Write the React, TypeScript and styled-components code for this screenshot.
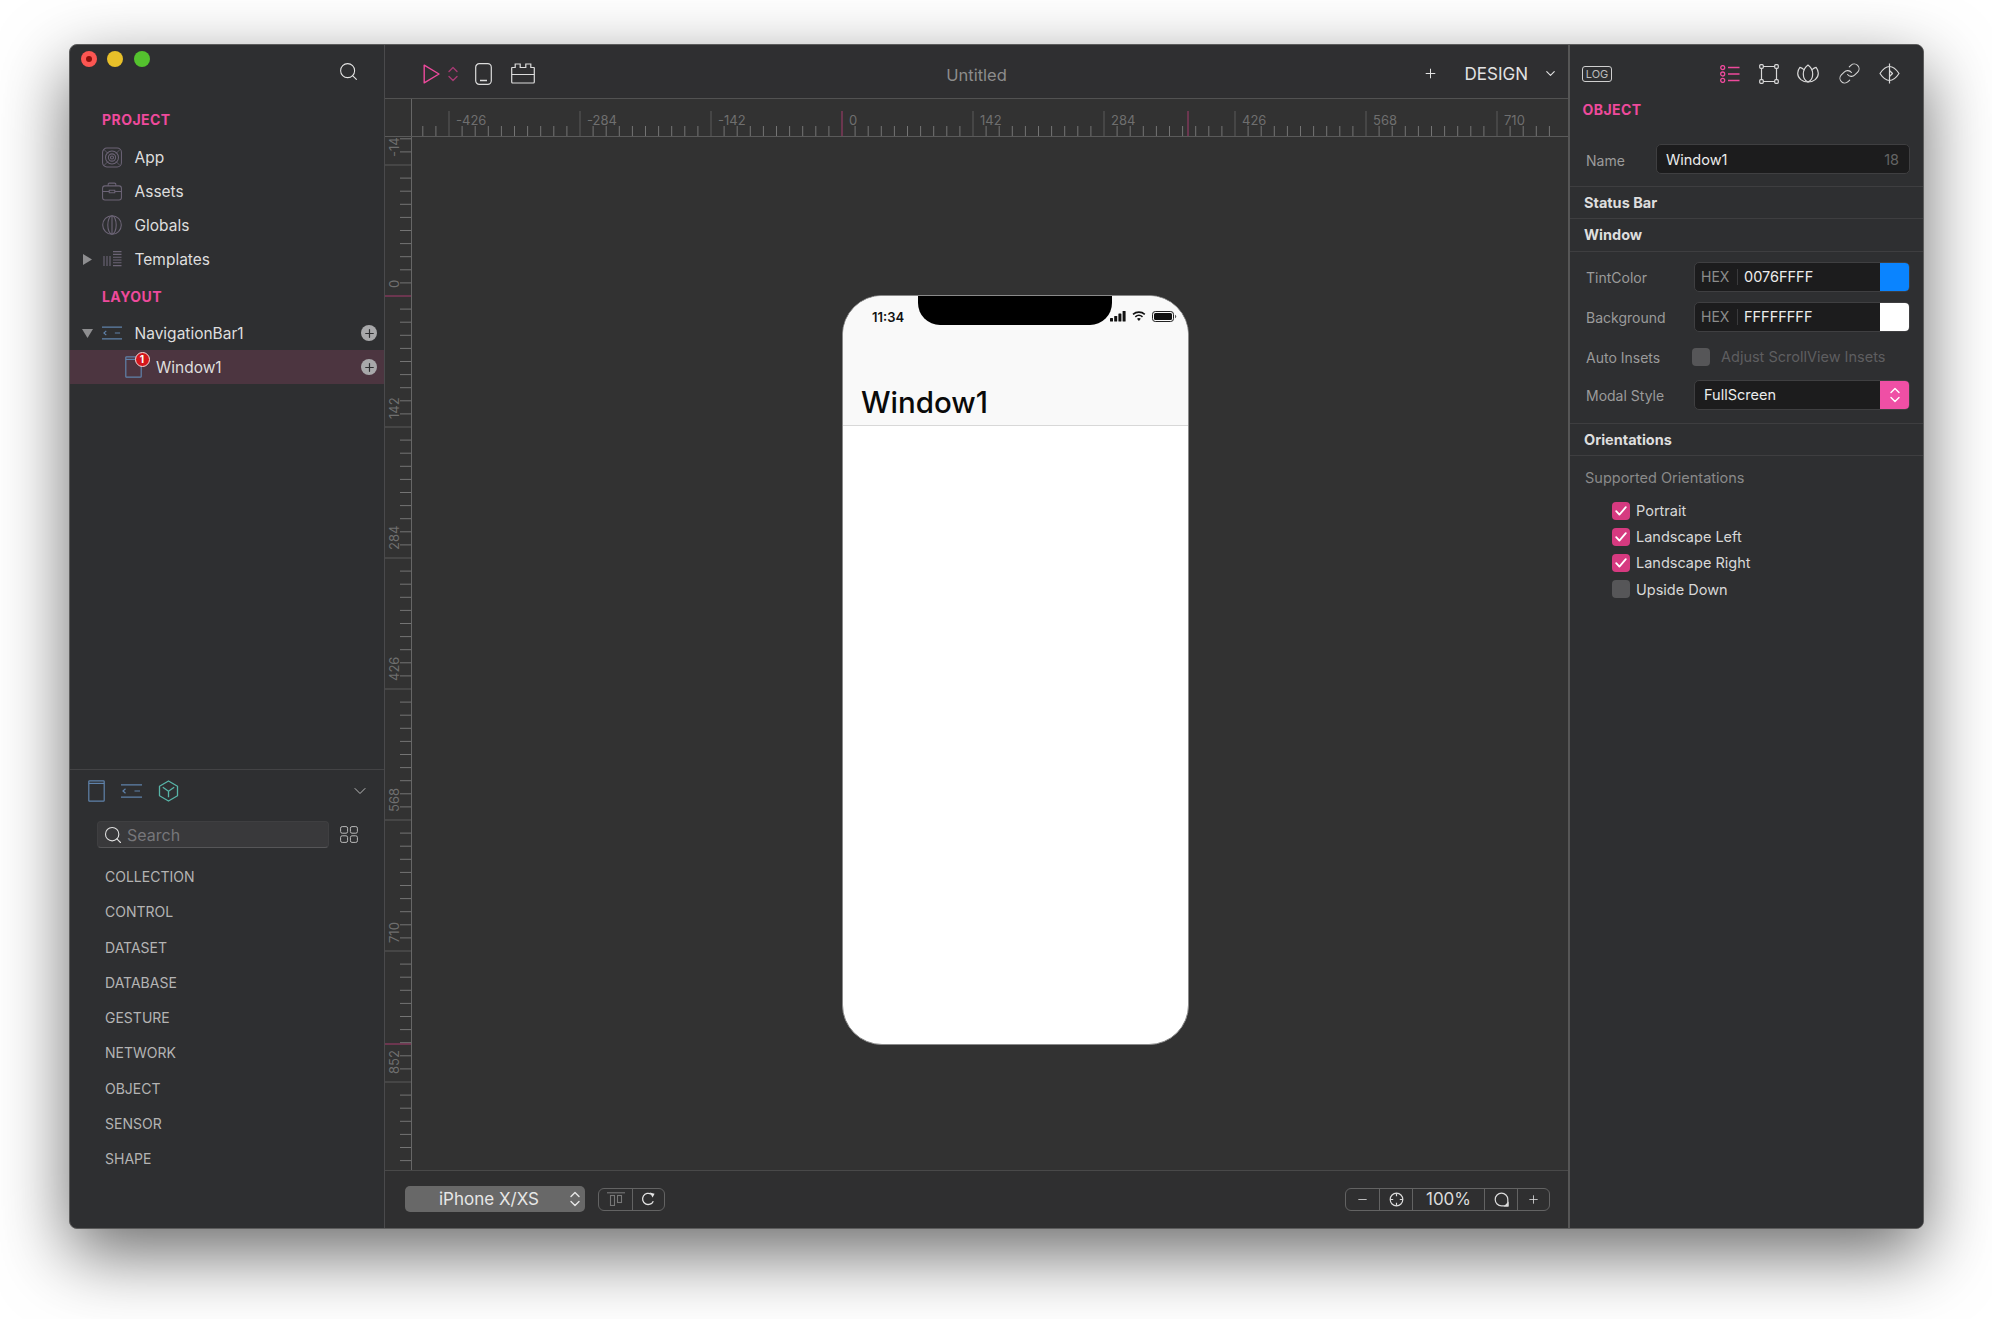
import React from 'react';
import styled, { createGlobalStyle } from 'styled-components';
import { Search, Plus, Minus, ChevronDown, Link as LinkGlyph } from 'lucide-react';

const PINK = '#ee4a9c';
const FONT = "Inter, 'Noto Sans', 'Liberation Sans', sans-serif";

const GlobalStyle = createGlobalStyle`
  html, body {
    margin: 0;
    background: #fff;
    font-family: ${FONT};
  }
  * { box-sizing: border-box; }
`;

const Page = styled.div`
  width: 1992px;
  height: 1319px;
  padding: 44px 0 0 69px;
  overflow: hidden;
`;

const Window = styled.div`
  width: 1855px;
  height: 1185px;
  display: grid;
  grid-template-columns: 315px 1fr 353px;
  background: #2e2f31;
  border: 1px solid #5c5c5c;
  border-radius: 8px;
  overflow: hidden;
  box-shadow: 0 25px 70px rgba(0, 0, 0, 0.58);
`;

/* left sidebar */

const Sidebar = styled.aside`
  display: flex;
  flex-direction: column;
  border-right: 1px solid #4a4a4c;
  min-height: 0;
`;

const SidebarTop = styled.div`
  flex: 1;
`;

const TitleBar = styled.div`
  height: 65px;
  padding: 6px 25px 0 11px;
  display: flex;
  justify-content: space-between;
  align-items: flex-start;
  color: #e4e4e4;
`;

const Lights = styled.div`
  display: flex;
  gap: 10.3px;
`;

const Light = styled.span<{ $color: string }>`
  width: 16px;
  height: 16px;
  border-radius: 50%;
  background: ${(p) => p.$color};
  display: flex;
  align-items: center;
  justify-content: center;
`;

const CloseDot = styled.span`
  width: 6px;
  height: 6px;
  border-radius: 50%;
  background: #8e0f0a;
`;

const SearchButton = styled.span`
  margin-top: 10px;
  display: flex;
`;

const SectionLabel = styled.div`
  font-size: 14px;
  font-weight: 700;
  line-height: 20px;
  color: ${PINK};
  letter-spacing: 0.45px;
`;

const SideLabel = styled(SectionLabel)<{ $top: number; $bottom: number }>`
  margin: ${(p) => p.$top}px 0 ${(p) => p.$bottom}px 32px;
`;

const TreeRow = styled.div<{ $selected?: boolean }>`
  height: 34px;
  display: flex;
  align-items: center;
  padding-left: 12px;
  padding-right: 7px;
  font-size: 15.5px;
  color: #dedede;
  background: ${(p) => (p.$selected ? '#4c3540' : 'transparent')};
`;

const Disclosure = styled.span`
  width: 20px;
  display: flex;
  align-items: center;
`;

const RowIcon = styled.span<{ $indent?: number }>`
  width: 20px;
  margin-left: ${(p) => p.$indent || 0}px;
  margin-right: 12.5px;
  display: flex;
  justify-content: center;
  position: relative;
`;

const Badge = styled.span`
  position: absolute;
  left: 11px;
  top: -4px;
  width: 15px;
  height: 15px;
  border-radius: 50%;
  background: #d4161c;
  border: 1px solid #f3dada;
  color: #fff;
  font-size: 10px;
  font-weight: 700;
  line-height: 13px;
  text-align: center;
`;

const AddCircle = styled.span`
  margin-left: auto;
  width: 16px;
  height: 16px;
  border-radius: 50%;
  background: #a8a8aa;
  color: #2e2f31;
  display: flex;
  align-items: center;
  justify-content: center;
`;

const Library = styled.div`
  height: 459px;
  border-top: 1px solid #434345;
`;

const LibraryTabs = styled.div`
  height: 42px;
  display: flex;
  align-items: center;
  gap: 16px;
  padding: 0 14px 0 18px;
  color: #b8b8b8;
`;

const TabChevron = styled.span`
  margin-left: auto;
  display: flex;
`;

const LibrarySearchRow = styled.div`
  margin-top: 9px;
  padding-left: 27px;
  display: flex;
  align-items: center;
  gap: 11px;
`;

const SearchField = styled.div`
  width: 232px;
  height: 27px;
  background: #39393b;
  border: 1px solid #3f3f41;
  border-bottom-color: #565658;
  border-radius: 4px;
  display: flex;
  align-items: center;
  gap: 4px;
  padding-left: 5px;
  font-size: 16px;
  color: #76767a;
`;

const CategoryList = styled.div`
  margin-top: 11px;
  padding-left: 35px;
`;

const Category = styled.div`
  height: 35.3px;
  line-height: 35.3px;
  font-size: 14px;
  color: #b4b4b4;
`;

/* centre column */

const Center = styled.main`
  display: flex;
  flex-direction: column;
  min-width: 0;
  background: #323232;
  border-right: 2px solid #565656;
`;

const Toolbar = styled.header`
  height: 54px;
  border-bottom: 1px solid #525252;
  background: #2f2f31;
  display: grid;
  grid-template-columns: 1fr auto 1fr;
  align-items: center;
  padding-top: 4px;
`;

const ToolGroup = styled.div`
  display: flex;
  align-items: center;
  padding-left: 38px;
`;

const ToolSlot = styled.span<{ $left: number }>`
  margin-left: ${(p) => p.$left}px;
  display: flex;
`;

const ToolTitle = styled.div`
  padding-top: 2px;
  font-size: 16.5px;
  color: #8c8c8c;
`;

const ModeGroup = styled.div`
  display: flex;
  align-items: center;
  justify-content: flex-end;
  padding-right: 10px;
  color: #e2e2e2;
`;

const ModeLabel = styled.span`
  font-size: 17px;
  margin: 0 15px 0 27px;
`;

const RulerSvg = styled.svg`
  display: block;
  flex: none;
`;

const RulerText = styled.text`
  font-family: ${FONT};
  font-size: 13px;
  fill: #6f6f6f;
`;

const Workspace = styled.div`
  flex: 1;
  display: flex;
  min-height: 0;
`;

const Canvas = styled.div`
  flex: 1;
  padding: 158px 0 0 430px;
`;

const Phone = styled.div`
  width: 347px;
  height: 750px;
  background: #fff;
  border: 1px solid #8a8a8a;
  border-radius: 40px;
  overflow: hidden;
`;

const PhoneNav = styled.div`
  height: 130px;
  background: #f9f9f9;
  border-bottom: 1px solid #d8d8d8;
`;

const StatusBar = styled.div`
  display: flex;
  align-items: flex-start;
  height: 87px;
`;

const StatusTime = styled.span`
  width: 75px;
  padding: 13px 0 0 29px;
  font-size: 13px;
  font-weight: 600;
  color: #111;
`;

const Notch = styled.span`
  width: 194px;
  height: 29px;
  background: #000;
  border-radius: 0 0 22px 22px;
`;

const StatusIcons = styled.span`
  margin: 14px 0 0 -2px;
  display: flex;
`;

const PhoneTitle = styled.div`
  padding-left: 18px;
  font-size: 29.5px;
  line-height: 38px;
  font-weight: 500;
  color: #0a0a0a;
`;

const BottomBar = styled.footer`
  height: 58px;
  border-top: 1px solid #494949;
  background: #2f2f30;
  display: flex;
  align-items: center;
  padding: 0 18px 1px 20px;
`;

const DeviceSelect = styled.div`
  width: 180px;
  height: 26px;
  border-radius: 5px;
  background: #686868;
  color: #e6e6e6;
  font-size: 17px;
  display: flex;
  align-items: center;
  padding: 0 5px 0 34px;
  justify-content: space-between;
`;

const ButtonGroup = styled.div<{ $left?: boolean }>`
  height: 23px;
  display: flex;
  border: 1px solid #636363;
  border-radius: 6px;
  margin-left: ${(p) => (p.$left ? 'auto' : '13px')};
  color: #dcdcdc;
`;

const GroupCell = styled.span<{ $width: number }>`
  width: ${(p) => p.$width}px;
  display: flex;
  align-items: center;
  justify-content: center;
  font-size: 17px;
  & + & {
    border-left: 1px solid #636363;
  }
`;

/* right panel */

const Inspector = styled.aside`
  min-width: 0;
  background: #2e2f31;
`;

const InspectorHead = styled.div`
  height: 55px;
  padding: 2px 23px 0 12px;
  display: flex;
  align-items: center;
  color: #d8d8d8;
`;

const LogBadge = styled.span`
  width: 30px;
  height: 16px;
  border: 1px solid #cfcfcf;
  border-radius: 3px;
  font-size: 11px;
  line-height: 14px;
  text-align: center;
  color: #bcbcbc;
  margin-right: auto;
`;

const InspectorTabs = styled.div`
  display: flex;
  align-items: center;
  gap: 18.5px;
`;

const ObjectLabel = styled(SectionLabel)`
  padding-left: 12.5px;
`;

const NameRow = styled.div`
  margin-top: 24px;
  padding: 0 13px 11.5px 16px;
  display: flex;
  align-items: center;
  border-bottom: 1px solid #3e3e40;
`;

const FieldLabel = styled.span<{ $width: number }>`
  width: ${(p) => p.$width}px;
  flex: none;
  padding-top: 2px;
  font-size: 14px;
  color: #9b9b9b;
`;

const Field = styled.div`
  flex: 1;
  height: 30px;
  background: #1c1c1d;
  border: 1px solid #3f3f41;
  border-radius: 5px;
  display: flex;
  align-items: center;
  justify-content: space-between;
  overflow: hidden;
  font-size: 14.5px;
  color: #ececec;
`;

const NameValue = styled.span`
  padding-left: 9px;
`;

const NameCount = styled.span`
  padding-right: 10px;
  font-size: 14.5px;
  color: #646464;
`;

const GroupHead = styled.div<{ $height: number }>`
  height: ${(p) => p.$height}px;
  display: flex;
  align-items: center;
  padding-left: 14px;
  font-size: 14.5px;
  font-weight: 700;
  color: #dedede;
  border-bottom: 1px solid #3e3e40;
`;

const FormBlock = styled.div`
  padding: 0 13px 13px 16px;
  border-bottom: 1px solid #3e3e40;
`;

const FormRow = styled.div`
  margin-top: 10px;
  display: flex;
  align-items: center;
  height: 30px;
`;

const InsetsRow = styled(FormRow)`
  margin-top: 12px;
  height: 26px;
`;

const HexPrefix = styled.span`
  width: 37px;
  height: 16px;
  margin-left: 6px;
  border-right: 1px solid #3a3a3c;
  line-height: 16px;
  color: #8b8b8b;
  font-size: 14px;
  flex: none;
`;

const HexValue = styled.span`
  flex: 1;
  padding-left: 6px;
  font-size: 14.5px;
`;

const Swatch = styled.span<{ $color: string }>`
  width: 29px;
  align-self: stretch;
  background: ${(p) => p.$color};
  display: flex;
  align-items: center;
  justify-content: center;
  color: #fff;
`;

const SelectValue = styled.span`
  flex: 1;
  padding-left: 9px;
  font-size: 14.5px;
`;

const Box = styled.span<{ $on?: boolean }>`
  width: 18px;
  height: 18px;
  flex: none;
  border-radius: 4px;
  background: ${(p) => (p.$on ? '#d63a80' : '#565658')};
  display: flex;
  align-items: center;
  justify-content: center;
`;

const InsetsHint = styled.span`
  margin-left: 11px;
  font-size: 14.5px;
  color: #5e5e60;
`;

const InsetsBox = styled(Box)`
  margin-left: -2px;
`;

const SupportedLabel = styled.div`
  margin: 12px 0 10px 15px;
  height: 20px;
  line-height: 20px;
  font-size: 14.5px;
  color: #8a8a8a;
`;

const CheckRow = styled.div`
  height: 26.2px;
  padding-left: 42px;
  display: flex;
  align-items: center;
  gap: 6px;
  font-size: 14.5px;
  color: #d8d8d8;
`;

/* drawings */

const PURPLE = '#6c6476';
const BLUE = '#5f82aa';

const AppIcon = () => (
  <svg width="21" height="21" viewBox="0 0 21 21" fill="none" stroke={PURPLE} strokeWidth="1.1">
    <rect x="0.6" y="0.6" width="19.8" height="19.8" rx="4.5" />
    <circle cx="10.5" cy="10.5" r="6.8" />
    <circle cx="10.5" cy="10.5" r="3.8" />
    <circle cx="10.5" cy="10.5" r="1.6" />
    <path d="M2 2l4.500 4.500M19 2l-4.500 4.500M2 19l4.500-4.500M19 19l-4.500-4.500" strokeWidth="0.8" />
  </svg>
);

const BriefcaseIcon = () => (
  <svg width="21" height="19" viewBox="0 0 21 19" fill="none" stroke={PURPLE} strokeWidth="1.1">
    <rect x="0.6" y="3.6" width="19.8" height="14.8" rx="2.5" />
    <path d="M6.500 3.500V2a1.300 1.300 0 0 1 1.300-1.300h5.400A1.300 1.300 0 0 1 14.500 2v1.500M0.600 9.500h7M13.400 9.500h7M7.600 8.200h5.800v2.600H7.600z" />
  </svg>
);

const GlobeIcon = () => (
  <svg width="20" height="20" viewBox="0 0 20 20" fill="none" stroke={PURPLE} strokeWidth="1.1">
    <circle cx="10" cy="10" r="9.3" />
    <ellipse cx="10" cy="10" rx="4.2" ry="9.3" />
    <path d="M10 0.7v18.6" />
  </svg>
);

const TemplatesIcon = () => (
  <svg width="19" height="16" viewBox="0 0 19 16" fill="none" stroke={PURPLE} strokeWidth="1.1">
    <path d="M1 5v10M4 5v10M7 5v10M10 .6h8.500M10 3.400h8.500M10 6.200h8.500M10 9h8.500M10 11.800h8.500M10 14.600h8.500" />
  </svg>
);

const NavBarIcon = () => (
  <svg width="21" height="14" viewBox="0 0 21 14" fill="none" stroke={BLUE} strokeWidth="1.2">
    <path d="M0 .8h21M0 13.200h21M4.500 4.800L2 7l2.500 2.200M13.500 7H19" />
  </svg>
);

const WindowIcon = () => (
  <svg width="17" height="22" viewBox="0 0 17 22" fill="none" stroke={BLUE} strokeWidth="1.2">
    <rect x="0.8" y="0.8" width="15.4" height="20.4" rx="0.8" />
    <path d="M0.8 3.400h15.400" />
  </svg>
);

const CubeIcon = () => (
  <svg width="21" height="22" viewBox="0 0 21 22" fill="none" stroke="#58b5a8" strokeWidth="1.3" strokeLinejoin="round">
    <path d="M10.500 1l9 5.200v9.600l-9 5.200-9-5.200V6.200z" />
    <path d="M4.800 7.200l5.700 4 5.700-4M10.500 11.200v6" />
  </svg>
);

const GridIcon = () => (
  <svg width="18" height="17" viewBox="0 0 18 17" fill="none" stroke="#b8b8b8" strokeWidth="1">
    <rect x="0.6" y="0.6" width="7" height="6.6" rx="1.6" />
    <rect x="10.4" y="0.6" width="7" height="6.6" rx="1.6" />
    <rect x="0.6" y="9.8" width="7" height="6.6" rx="1.6" />
    <rect x="10.4" y="9.8" width="7" height="6.6" rx="1.6" />
  </svg>
);

const PlayIcon = () => (
  <svg width="17" height="20" viewBox="0 0 17 20" fill="none" stroke={PINK} strokeWidth="1.4" strokeLinejoin="round">
    <path d="M1.200 1.200L16 10 1.200 18.800z" />
  </svg>
);

const Stepper = ({ color }: { color: string }) => (
  <svg width="10" height="16" viewBox="0 0 10 16" fill="none" stroke={color} strokeWidth="1.4" strokeLinecap="round" strokeLinejoin="round">
    <path d="M1 5.500L5 1.500l4 4M1 10.500l4 4 4-4" />
  </svg>
);

const DeviceIcon = () => (
  <svg width="17" height="22" viewBox="0 0 17 22" fill="none" stroke="#dcdcdc" strokeWidth="1.2">
    <rect x="0.7" y="0.7" width="15.6" height="20.6" rx="3.6" />
    <path d="M5 17.600h7" strokeWidth="1.5" />
  </svg>
);

const BrickIcon = () => (
  <svg width="24" height="21" viewBox="0 0 24 21" fill="none" stroke="#dcdcdc" strokeWidth="1.2">
    <path d="M1 4.500h3.200V1h5v3.500h5.600V1h5v3.500H23c.1 0 .3.2.3.4V19a1 1 0 0 1-1 1H1.700a1 1 0 0 1-1-1V5c0-.3.1-.5.3-.5z" />
    <path d="M.7 11.500h22.600" />
  </svg>
);

const ListTabIcon = () => (
  <svg width="20" height="18" viewBox="0 0 20 18" fill="none" stroke={PINK} strokeWidth="1.3">
    <circle cx="2.700" cy="2.600" r="2" />
    <circle cx="2.700" cy="9" r="2" />
    <circle cx="2.700" cy="15.400" r="2" />
    <path d="M8 2.600h11.500M8 9h11.500M8 15.400h11.500" strokeWidth="1.5" />
  </svg>
);

const BoundsIcon = () => (
  <svg width="20" height="20" viewBox="0 0 20 20" fill="none" stroke="#d8d8d8" strokeWidth="1.2">
    <path d="M4 2.500h12M4 17.500h12M2.500 4v12M17.500 4v12" />
    <rect x="0.7" y="0.7" width="3.6" height="3.6" rx="1" />
    <rect x="15.700" y="0.7" width="3.6" height="3.6" rx="1" />
    <rect x="0.7" y="15.700" width="3.6" height="3.6" rx="1" />
    <rect x="15.700" y="15.700" width="3.6" height="3.6" rx="1" />
  </svg>
);

const LotusIcon = () => (
  <svg width="22" height="19" viewBox="0 0 22 19" fill="none" stroke="#d8d8d8" strokeWidth="1.2" strokeLinejoin="round">
    <path d="M11 1C8 3.200 6.300 6.500 6.300 10c0 3.800 2 6.800 4.700 8 2.700-1.200 4.700-4.200 4.700-8 0-3.500-1.700-6.800-4.700-9z" />
    <path d="M6.900 5.600C5.600 4.500 4.200 3.700 2.900 3.400 1.500 5.200.7 7.200.7 9.300.7 14.500 5.500 18 11 18s10.300-3.500 10.300-8.700c0-2.100-.8-4.100-2.200-5.900-1.300.3-2.700 1.100-4 2.200" />
  </svg>
);

const EyeIcon = () => (
  <svg width="21" height="21" viewBox="0 0 21 21" fill="none" stroke="#d8d8d8" strokeWidth="1.2" strokeLinejoin="round">
    <path d="M10.500 3.500c3.500 0 7 3.200 9.500 7-2.500 3.800-6 7-9.500 7s-7-3.200-9.500-7c2.500-3.800 6-7 9.500-7z" />
    <path d="M10.500 .5v20M10.500 7.500l3 3-3 3" />
  </svg>
);

const CheckMark = () => (
  <svg width="12" height="10" viewBox="0 0 12 10" fill="none" stroke="#fff" strokeWidth="1.800" strokeLinecap="round" strokeLinejoin="round">
    <path d="M1.200 5.200l3.200 3.400 6.400-7.400" />
  </svg>
);

const StatusGlyphs = () => (
  <svg width="68" height="13" viewBox="0 0 68 13">
    <rect x="0" y="8" width="3" height="3.500" rx="0.6" fill="#111" />
    <rect x="4.200" y="6" width="3" height="5.500" rx="0.6" fill="#111" />
    <rect x="8.400" y="3.500" width="3" height="8" rx="0.6" fill="#111" />
    <rect x="12.600" y="1" width="3" height="10.500" rx="0.6" fill="#111" />
    <path d="M23 4.300a9 9 0 0 1 11.800 0M25.300 6.800a5.600 5.600 0 0 1 7.200 0" fill="none" stroke="#111" strokeWidth="1.600" />
    <path d="M27 8.800a3 3 0 0 1 3.800 0L28.900 11z" fill="#111" />
    <rect x="42.500" y="1.500" width="21" height="10" rx="2.800" fill="none" stroke="#222" strokeWidth="1" />
    <rect x="44" y="3" width="18" height="7" rx="1.500" fill="#111" />
    <path d="M65 4.800v3.400c.7-.2 1.300-.9 1.300-1.700s-.6-1.500-1.300-1.700z" fill="#555" />
  </svg>
);

const FitIcon = () => (
  <svg width="15" height="15" viewBox="0 0 15 15" fill="none" stroke="#dcdcdc" strokeWidth="1.200">
    <circle cx="7.500" cy="7.500" r="6.300" />
    <path d="M7.500 1.200v3M7.500 10.800v3M1.200 7.500h3M10.800 7.500h3" />
  </svg>
);

const ZoomFillIcon = () => (
  <svg width="15" height="15" viewBox="0 0 15 15" fill="none" stroke="#dcdcdc" strokeWidth="1.200">
    <path d="M13.800 13.800H7.500a6.300 6.300 0 1 1 6.300-6.300z" />
    <path d="M14 14h-3l3-3z" fill="#dcdcdc" />
  </svg>
);

const AlignIcon = () => (
  <svg width="18" height="14" viewBox="0 0 18 14" fill="none" stroke="#777" strokeWidth="1.100">
    <path d="M0 .8h18" />
    <rect x="3.500" y="3.500" width="4" height="10" />
    <rect x="10.500" y="3.500" width="4" height="7" />
  </svg>
);

const RefreshIcon = () => (
  <svg width="15" height="14" viewBox="0 0 15 14" fill="none" stroke="#e4e4e4" strokeWidth="1.300">
    <path d="M12.300 9.200A5.600 5.600 0 1 1 10.400 2.300" />
    <path d="M8.800 .4l4.800 1.400-2 3.800z" fill="#e4e4e4" stroke="none" />
  </svg>
);

const Triangle = ({ open }: { open?: boolean }) => (
  <svg width="11" height="11" viewBox="0 0 11 11" fill="#8e8e90">
    {open ? <path d="M0 1h11L5.500 10z" /> : <path d="M1 0l9 5.500-9 5.500z" />}
  </svg>
);

/* rulers */

const TICK = 13.1;
const MAJOR = 131;

const TopRuler = () => {
  const originX = 842 - 385;
  const ticks: React.ReactNode[] = [];
  for (let k = -32; k < 55; k++) {
    const x = originX + k * TICK;
    if (x < 27 || x > 1183) continue;
    const isMajor = k % 10 === 0;
    ticks.push(
      <line key={k} x1={x} x2={x} y1={isMajor ? 12 : 27} y2={37} stroke={isMajor ? (k === 0 ? '#a53a6c' : '#5a5a5a') : '#747474'} />
    );
  }
  const labels = ['-426', '-284', '-142', '0', '142', '284', '426', '568', '710'];
  return (
    <RulerSvg width="1183" height="38" viewBox="0 0 1183 38">
      {ticks}
      <line x1={1188 - 385} x2={1188 - 385} y1="12" y2="37" stroke="#a53a6c" />
      {labels.map((text, i) => (
        <RulerText key={text} x={originX + (i - 3) * MAJOR + 7} y="25.500">
          {text}
        </RulerText>
      ))}
      <line x1="26.500" x2="26.500" y1="0" y2="38" stroke="#666" />
      <line x1="0" x2="1183" y1="37.500" y2="37.500" stroke="#5a5a5a" />
    </RulerSvg>
  );
};

const SideRuler = () => {
  const originY = 296 - 137;
  const height = 1170 - 137;
  const ticks: React.ReactNode[] = [];
  for (let k = -12; k < 68; k++) {
    const y = originY + k * TICK;
    if (y < 0 || y > height) continue;
    const isMajor = k % 10 === 0;
    ticks.push(
      <line key={k} x1={isMajor ? 0 : 15} x2={26} y1={y} y2={y} stroke={isMajor ? (k === 0 ? '#a53a6c' : '#5a5a5a') : '#747474'} />
    );
  }
  const labels = ['-14', '0', '142', '284', '426', '568', '710', '852'];
  return (
    <RulerSvg width="27" height={height} viewBox={`0 0 27 ${height}`}>
      {ticks}
      <line x1="0" x2="26" y1={1044 - 137} y2={1044 - 137} stroke="#a53a6c" />
      {labels.map((text, i) => {
        const y = originY + (i - 1) * MAJOR - 8;
        return (
          <RulerText key={text} transform={`translate(14 ${y}) rotate(-90)`}>
            {text}
          </RulerText>
        );
      })}
      <line x1="26.500" x2="26.500" y1="0" y2={height} stroke="#666" />
    </RulerSvg>
  );
};

const categories = ['COLLECTION', 'CONTROL', 'DATASET', 'DATABASE', 'GESTURE', 'NETWORK', 'OBJECT', 'SENSOR', 'SHAPE'];

const orientations = [
  { label: 'Portrait', on: true },
  { label: 'Landscape Left', on: true },
  { label: 'Landscape Right', on: true },
  { label: 'Upside Down', on: false },
];

const colorRows = [
  { label: 'TintColor', value: '0076FFFF', color: '#0a84ff' },
  { label: 'Background', value: 'FFFFFFFF', color: '#ffffff' },
];

export default function App() {
  return (
    <Page>
      <GlobalStyle />
      <Window>
        <Sidebar>
          <SidebarTop>
            <TitleBar>
              <Lights>
                <Light $color="#fc5652"><CloseDot /></Light>
                <Light $color="#e8c029" />
                <Light $color="#54c22e" />
              </Lights>
              <SearchButton><Search size={21} strokeWidth={1.2} /></SearchButton>
            </TitleBar>
            <SideLabel $top={0} $bottom={10}>PROJECT</SideLabel>
            <TreeRow><Disclosure /><RowIcon><AppIcon /></RowIcon>App</TreeRow>
            <TreeRow><Disclosure /><RowIcon><BriefcaseIcon /></RowIcon>Assets</TreeRow>
            <TreeRow><Disclosure /><RowIcon><GlobeIcon /></RowIcon>Globals</TreeRow>
            <TreeRow><Disclosure><Triangle /></Disclosure><RowIcon><TemplatesIcon /></RowIcon>Templates</TreeRow>
            <SideLabel $top={10.5} $bottom={9.5}>LAYOUT</SideLabel>
            <TreeRow>
              <Disclosure><Triangle open /></Disclosure>
              <RowIcon><NavBarIcon /></RowIcon>NavigationBar1
              <AddCircle><Plus size={13} strokeWidth={2.2} /></AddCircle>
            </TreeRow>
            <TreeRow $selected>
              <Disclosure />
              <RowIcon $indent={21.5}><WindowIcon /><Badge>1</Badge></RowIcon>
              Window1
              <AddCircle><Plus size={13} strokeWidth={2.2} /></AddCircle>
            </TreeRow>
          </SidebarTop>
          <Library>
            <LibraryTabs>
              <WindowIcon />
              <NavBarIcon />
              <CubeIcon />
              <TabChevron><ChevronDown size={20} strokeWidth={1.2} /></TabChevron>
            </LibraryTabs>
            <LibrarySearchRow>
              <SearchField>
                <Search size={20} strokeWidth={1.3} color="#e0e0e0" />
                Search
              </SearchField>
              <GridIcon />
            </LibrarySearchRow>
            <CategoryList>
              {categories.map((c) => <Category key={c}>{c}</Category>)}
            </CategoryList>
          </Library>
        </Sidebar>

        <Center>
          <Toolbar>
            <ToolGroup>
              <PlayIcon />
              <ToolSlot $left={8}><Stepper color="#a43a72" /></ToolSlot>
              <ToolSlot $left={17}><DeviceIcon /></ToolSlot>
              <ToolSlot $left={18.5}><BrickIcon /></ToolSlot>
            </ToolGroup>
            <ToolTitle>Untitled</ToolTitle>
            <ModeGroup>
              <Plus size={15} strokeWidth={1.6} />
              <ModeLabel>DESIGN</ModeLabel>
              <ChevronDown size={15} strokeWidth={1.8} />
            </ModeGroup>
          </Toolbar>
          <TopRuler />
          <Workspace>
            <SideRuler />
            <Canvas>
              <Phone>
                <PhoneNav>
                  <StatusBar>
                    <StatusTime>11:34</StatusTime>
                    <Notch />
                    <StatusIcons><StatusGlyphs /></StatusIcons>
                  </StatusBar>
                  <PhoneTitle>Window1</PhoneTitle>
                </PhoneNav>
              </Phone>
            </Canvas>
          </Workspace>
          <BottomBar>
            <DeviceSelect>
              iPhone X/XS
              <Stepper color="#e6e6e6" />
            </DeviceSelect>
            <ButtonGroup>
              <GroupCell $width={33}><AlignIcon /></GroupCell>
              <GroupCell $width={32}><RefreshIcon /></GroupCell>
            </ButtonGroup>
            <ButtonGroup $left>
              <GroupCell $width={33}><Minus size={13} strokeWidth={1.5} /></GroupCell>
              <GroupCell $width={33}><FitIcon /></GroupCell>
              <GroupCell $width={72}>100%</GroupCell>
              <GroupCell $width={33}><ZoomFillIcon /></GroupCell>
              <GroupCell $width={32}><Plus size={13} strokeWidth={1.5} /></GroupCell>
            </ButtonGroup>
          </BottomBar>
        </Center>

        <Inspector>
          <InspectorHead>
            <LogBadge>LOG</LogBadge>
            <InspectorTabs>
              <ListTabIcon />
              <BoundsIcon />
              <LotusIcon />
              <LinkGlyph size={23} strokeWidth={1.1} />
              <EyeIcon />
            </InspectorTabs>
          </InspectorHead>
          <ObjectLabel>OBJECT</ObjectLabel>
          <NameRow>
            <FieldLabel $width={70}>Name</FieldLabel>
            <Field>
              <NameValue>Window1</NameValue>
              <NameCount>18</NameCount>
            </Field>
          </NameRow>
          <GroupHead $height={32.5}>Status Bar</GroupHead>
          <GroupHead $height={32.5}>Window</GroupHead>
          <FormBlock>
            {colorRows.map((row) => (
              <FormRow key={row.label}>
                <FieldLabel $width={108}>{row.label}</FieldLabel>
                <Field>
                  <HexPrefix>HEX</HexPrefix>
                  <HexValue>{row.value}</HexValue>
                  <Swatch $color={row.color} />
                </Field>
              </FormRow>
            ))}
            <InsetsRow>
              <FieldLabel $width={108}>Auto Insets</FieldLabel>
              <InsetsBox />
              <InsetsHint>Adjust ScrollView Insets</InsetsHint>
            </InsetsRow>
            <FormRow>
              <FieldLabel $width={108}>Modal Style</FieldLabel>
              <Field>
                <SelectValue>FullScreen</SelectValue>
                <Swatch $color="#ef4fa5"><Stepper color="#fff" /></Swatch>
              </Field>
            </FormRow>
          </FormBlock>
          <GroupHead $height={32}>Orientations</GroupHead>
          <SupportedLabel>Supported Orientations</SupportedLabel>
          {orientations.map((o) => (
            <CheckRow key={o.label}>
              <Box $on={o.on}>{o.on && <CheckMark />}</Box>
              {o.label}
            </CheckRow>
          ))}
        </Inspector>
      </Window>
    </Page>
  );
}
